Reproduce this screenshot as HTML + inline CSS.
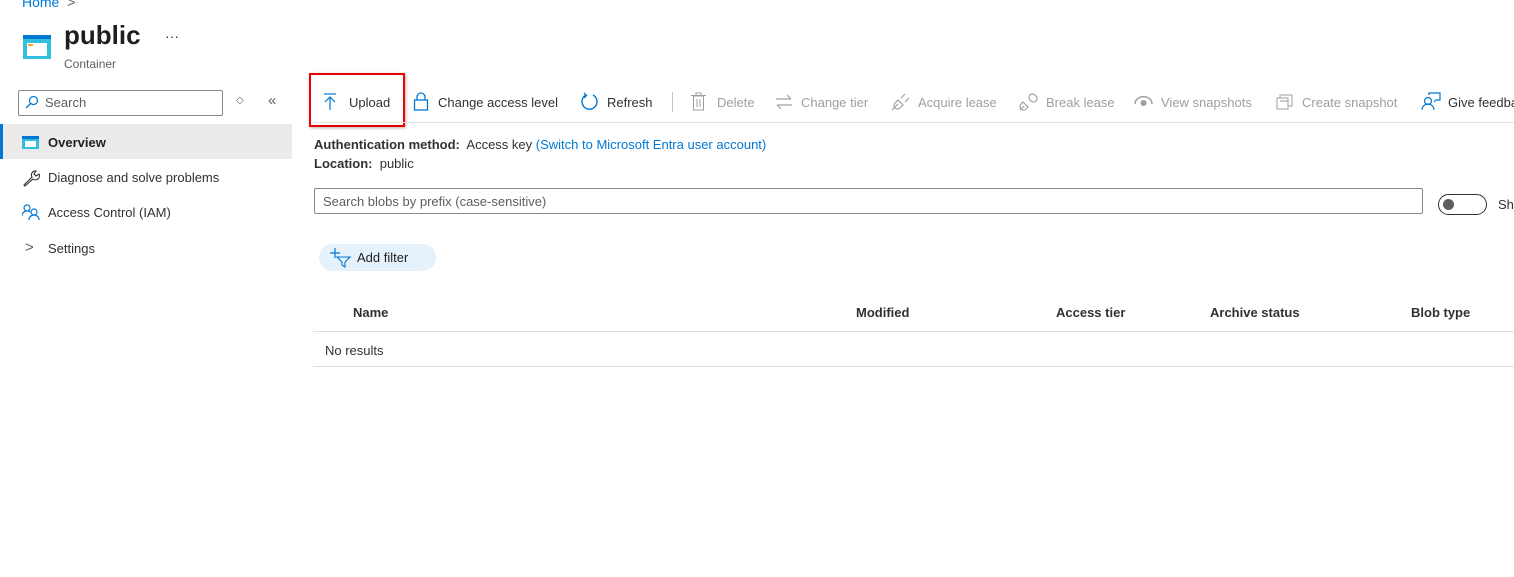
<!DOCTYPE html><html><head><style>
*{margin:0;padding:0;box-sizing:border-box}
body{width:1514px;height:577px;background:#fff;font-family:"Liberation Sans",sans-serif;font-size:13px;color:#323130;position:relative;overflow:hidden}
.a{position:absolute;white-space:nowrap}
.g{color:#a19f9d}
.b{font-weight:bold}
svg{position:absolute}
</style></head><body>
<div class="a" style="left:22px;top:-6px;color:#0078d4;font-size:14px">Home &nbsp;<span style="color:#605e5c">&gt;</span></div>
<svg style="left:23px;top:35px" width="28" height="24"><rect x="0" y="0" width="28" height="4" fill="#0078d4"/><rect x="0" y="4" width="28" height="20" fill="#32bedd"/><rect x="4" y="8" width="20" height="13" fill="#fff"/><rect x="5" y="9" width="5" height="2" fill="#f9a825"/></svg>
<div class="a" style="left:64px;top:20px;font-size:26px;font-weight:600;color:#201f1e">public</div>
<div class="a" style="left:165px;top:28px;font-size:14px">···</div>
<div class="a" style="left:64px;top:57px;font-size:12px;color:#605e5c">Container</div>
<div class="a" style="left:18px;top:90px;width:205px;height:26px;border:1px solid #8a8886;border-radius:2px"></div>
<svg style="left:25px;top:95px" width="14" height="14"><circle cx="8.5" cy="5.5" r="4" fill="none" stroke="#0078d4" stroke-width="1.2"/><line x1="5.5" y1="8.5" x2="1" y2="13" stroke="#0078d4" stroke-width="1.3"/></svg>
<div class="a" style="left:45px;top:95px;color:#605e5c">Search</div>
<div class="a" style="left:236px;top:95px;font-size:10px;color:#605e5c">◇</div>
<div class="a" style="left:268px;top:92px;font-size:15px;color:#605e5c">«</div>
<div class="a" style="left:0;top:124px;width:292px;height:35px;background:#edebe9"></div>
<div class="a" style="left:0;top:124px;width:3px;height:35px;background:#0078d4"></div>
<svg style="left:22px;top:136px" width="17" height="13"><rect width="17" height="3" fill="#0078d4"/><rect y="3" width="17" height="10" fill="#32bedd"/><rect x="3" y="5" width="11" height="6" fill="#fff"/></svg>
<div class="a" style="left:48px;top:135px;font-weight:600;color:#201f1e">Overview</div>
<svg style="left:22px;top:169px" width="18" height="18"><path d="M2 16 L10 8 A4 4 0 0 1 14 2 L12 5 L14 7 L17 5 A4 4 0 0 1 11 10 L3 17 Z" fill="none" stroke="#323130" stroke-width="1.1"/></svg>
<div class="a" style="left:48px;top:170px">Diagnose and solve problems</div>
<svg style="left:22px;top:204px" width="18" height="16"><circle cx="5" cy="4" r="3" fill="none" stroke="#0078d4" stroke-width="1.2"/><path d="M0 12 A5 5 0 0 1 8 8" fill="none" stroke="#0078d4" stroke-width="1.2"/><circle cx="12" cy="8" r="3" fill="none" stroke="#0078d4" stroke-width="1.2"/><path d="M7 16 A5 5 0 0 1 17 16" fill="none" stroke="#0078d4" stroke-width="1.2"/></svg>
<div class="a" style="left:48px;top:205px">Access Control (IAM)</div>
<div class="a" style="left:25px;top:239px;font-size:15px;color:#605e5c">&gt;</div>
<div class="a" style="left:48px;top:241px">Settings</div>

<!-- toolbar -->
<div class="a" style="left:309px;top:73px;width:96px;height:54px;border:2px solid #e00;box-shadow:1px 1px 3px rgba(0,0,0,.3)"></div>
<svg style="left:323px;top:93px" width="14" height="18"><line x1="1" y1="1" x2="13" y2="1" stroke="#0078d4" stroke-width="1.2"/><line x1="7" y1="4" x2="7" y2="17" stroke="#0078d4" stroke-width="1.2"/><path d="M2 9 L7 4 L12 9" fill="none" stroke="#0078d4" stroke-width="1.2"/></svg>
<div class="a" style="left:349px;top:95px">Upload</div>
<svg style="left:413px;top:92px" width="16" height="19"><path d="M4 8 V5 A4 4 0 0 1 12 5 V8" fill="none" stroke="#0078d4" stroke-width="1.3"/><rect x="1.5" y="8" width="13" height="10" fill="none" stroke="#0078d4" stroke-width="1.3"/></svg>
<div class="a" style="left:438px;top:95px">Change access level</div>
<svg style="left:580px;top:92px" width="19" height="19"><path d="M6 3 A7.5 7.5 0 1 0 13 3" fill="none" stroke="#0078d4" stroke-width="1.4"/><path d="M4 1 L6.5 3.5 L4 6" fill="none" stroke="#0078d4" stroke-width="1.3"/></svg>
<div class="a" style="left:607px;top:95px">Refresh</div>
<div class="a" style="left:672px;top:92px;width:1px;height:20px;background:#c8c6c4"></div>
<svg style="left:691px;top:92px" width="15" height="19"><rect x="2.5" y="4" width="10" height="14" fill="none" stroke="#a19f9d"/><line x1="0" y1="3.5" x2="15" y2="3.5" stroke="#a19f9d"/><rect x="5" y="1" width="5" height="2.5" fill="none" stroke="#a19f9d"/><line x1="6" y1="7" x2="6" y2="15" stroke="#a19f9d"/><line x1="9" y1="7" x2="9" y2="15" stroke="#a19f9d"/></svg>
<div class="a g" style="left:717px;top:95px">Delete</div>
<svg style="left:775px;top:94px" width="18" height="16"><path d="M1 5 H16 M12 1 L16 5 M17 11 H2 M6 15 L2 11" fill="none" stroke="#a19f9d" stroke-width="1.2"/></svg>
<div class="a g" style="left:801px;top:95px">Change tier</div>
<svg style="left:891px;top:93px" width="19" height="18"><path d="M1 17 L7 11 M7 7 L12 12 L9 15 A3 3 0 0 1 4 10 Z M10 5 L14 1 M14 9 L18 5" fill="none" stroke="#a19f9d" stroke-width="1.2"/></svg>
<div class="a g" style="left:918px;top:95px">Acquire lease</div>
<svg style="left:1019px;top:93px" width="19" height="18"><path d="M1 17 L5 13 M4 9 L9 14 L7 16 A3 3 0 0 1 2 11 Z M11 7 A3 3 0 0 1 16 2 L17 3 A3 3 0 0 1 12 8 Z" fill="none" stroke="#a19f9d" stroke-width="1.2"/></svg>
<div class="a g" style="left:1046px;top:95px">Break lease</div>
<svg style="left:1134px;top:95px" width="19" height="12"><path d="M1 9 A8 7 0 0 1 18 9" fill="none" stroke="#a19f9d" stroke-width="1.5"/><circle cx="9.5" cy="8" r="3" fill="#a19f9d"/></svg>
<div class="a g" style="left:1161px;top:95px">View snapshots</div>
<svg style="left:1276px;top:93px" width="18" height="17"><rect x="1" y="5" width="11" height="11" fill="none" stroke="#a19f9d"/><path d="M4 5 V2 H16 V13 H12 M4 8 H12" fill="none" stroke="#a19f9d"/></svg>
<div class="a g" style="left:1302px;top:95px">Create snapshot</div>
<svg style="left:1421px;top:92px" width="20" height="19"><circle cx="7" cy="9" r="3.5" fill="none" stroke="#0078d4" stroke-width="1.2"/><path d="M1 18 A6 6 0 0 1 13 18" fill="none" stroke="#0078d4" stroke-width="1.2"/><path d="M8 3 V1 H19 V8 H15 L13 10" fill="none" stroke="#0078d4" stroke-width="1.2"/></svg>
<div class="a" style="left:1448px;top:95px">Give feedback</div>
<div class="a" style="left:313px;top:122px;width:1201px;height:1px;background:#e1dfdd"></div>

<div class="a" style="left:314px;top:137px"><span class="b">Authentication method:</span>&nbsp; Access key <span style="color:#0078d4">(Switch to Microsoft Entra user account)</span></div>
<div class="a" style="left:314px;top:156px"><span class="b">Location:</span>&nbsp; public</div>
<div class="a" style="left:314px;top:188px;width:1109px;height:26px;border:1px solid #8a8886;border-radius:2px"></div>
<div class="a" style="left:323px;top:194px;color:#605e5c">Search blobs by prefix (case-sensitive)</div>
<div class="a" style="left:1438px;top:194px;width:49px;height:21px;border:1px solid #323130;border-radius:11px"></div>
<div class="a" style="left:1443px;top:199px;width:11px;height:11px;border-radius:50%;background:#605e5c"></div>
<div class="a" style="left:1498px;top:197px">Sh</div>
<div class="a" style="left:319px;top:244px;width:117px;height:27px;background:#e5f1fb;border-radius:14px"></div>
<svg style="left:330px;top:248px" width="22" height="20"><path d="M5 0 V10 M0 5 H10" stroke="#0078d4" stroke-width="1.2"/><path d="M7 9 H20 L15 14 V19 L12 17 V14 Z" fill="none" stroke="#0078d4" stroke-width="1.1"/></svg>
<div class="a" style="left:357px;top:250px;color:#201f1e">Add filter</div>
<div class="a b" style="left:353px;top:305px">Name</div>
<div class="a b" style="left:856px;top:305px">Modified</div>
<div class="a b" style="left:1056px;top:305px">Access tier</div>
<div class="a b" style="left:1210px;top:305px">Archive status</div>
<div class="a b" style="left:1411px;top:305px">Blob type</div>
<div class="a" style="left:313px;top:331px;width:1201px;height:1px;background:#e1dfdd"></div>
<div class="a" style="left:325px;top:343px">No results</div>
<div class="a" style="left:313px;top:366px;width:1201px;height:1px;background:#e1dfdd"></div>
</body></html>
